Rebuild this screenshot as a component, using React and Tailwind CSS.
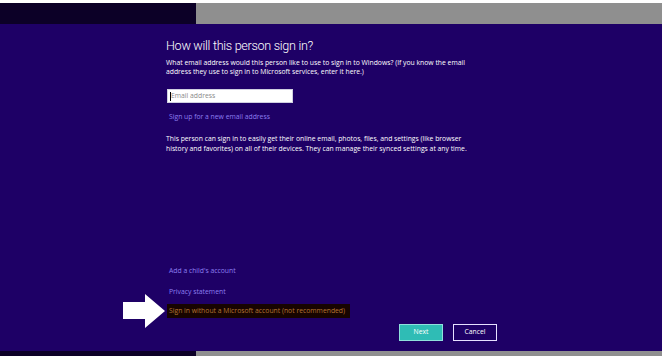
export default function App() {
  const font = { fontFamily: '"Open Sans", "Noto Sans", sans-serif' };
  return (
    <div className="w-[664px] h-[356px] bg-white flex flex-col overflow-hidden" style={font}>
      <div className="h-[3px] bg-white" />
      <div className="h-[21px] flex">
        <div className="w-[196px] bg-[#0c0027]" />
        <div className="w-[466px] bg-[#8f8f8f]" />
        <div className="flex-1 bg-white" />
      </div>
      <div className="h-[327px] flex">
        <div className="w-[662px] bg-[#1e0066] relative flex flex-col">
          <div className="ml-[166px] mt-[13px] flex flex-col">
            <h1 className="text-[12.6px] leading-[18px] font-light text-white tracking-[-0.3px] font-[Roboto,sans-serif]">How will this person sign in?</h1>
            <p className="mt-[3px] text-[6.8px] leading-[9px] text-white w-[320px]">
              What email address would this person like to use to sign in to Windows? (If you know the email address they use to sign in to Microsoft services, enter it here.)
            </p>
            <div className="mt-[13px] ml-[1px] w-[126px] h-[14px] bg-white border border-[#cfcfe0] flex items-center pl-[2px]">
              <span className="w-[1px] h-[9px] bg-black" />
              <span className="text-[6.8px] text-[#8a8a8a] leading-none">Email address</span>
            </div>
            <a className="mt-[9px] ml-[3px] text-[6.8px] leading-[9px] text-[#8d7ef0]">Sign up for a new email address</a>
            <p className="mt-[13px] text-[6.8px] leading-[10px] text-white w-[310px]">
              This person can sign in to easily get their online email, photos, files, and settings (like browser history and favorites) on all of their devices. They can manage their synced settings at any time.
            </p>
          </div>
          <div className="flex-1" />
          <div className="ml-[167px] flex flex-col">
            <a className="ml-[2px] text-[6.8px] leading-[9px] text-[#8d7ef0]">Add a child's account</a>
            <a className="mt-[12px] ml-[2px] text-[6.8px] leading-[9px] text-[#8d7ef0]">Privacy statement</a>
            <div className="mt-[8px] flex items-start">
              <span className="w-[183px] h-[14px] bg-[#170400] text-[#b87530] text-[6.8px] leading-[14px] pl-[2px]">Sign in without a Microsoft account (not recommended)</span>
            </div>
          </div>
          <div className="flex justify-start ml-[399px] gap-[10px] mt-[6px] mb-[10px]">
            <button className="w-[44px] h-[17px] bg-[#2fbcb5] border border-[#8fe0dc] text-white text-[6.8px] leading-none">Next</button>
            <button className="w-[44px] h-[17px] bg-[#1e0066] border border-[#e6e0ff] text-white text-[6.8px] leading-none">Cancel</button>
          </div>
          <svg className="absolute left-[123px] top-[270px]" width="43" height="35" viewBox="0 0 43 35">
            <polygon points="0,8 22,8 22,0 42,17 22,34 22,25 0,25" fill="#ffffff" />
          </svg>
        </div>
        <div className="flex-1 bg-white" />
      </div>
      <div className="h-[5px] flex">
        <div className="w-[196px] bg-[#0c0027]" />
        <div className="w-[466px] bg-[#8f8f8f]" />
        <div className="flex-1 bg-white" />
      </div>
    </div>
  );
}
